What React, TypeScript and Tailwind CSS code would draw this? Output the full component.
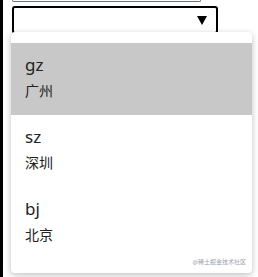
const CITIES = [
  { code: 'gz', name: '广州' },
  { code: 'sz', name: '深圳' },
  { code: 'bj', name: '北京' },
];

const FONT = "font-['Noto_Sans','Noto_Sans_CJK_SC',sans-serif]";

export default function App() {
  return (
    <div className={`relative h-[277px] w-[258px] overflow-hidden border-l-[3px] border-black bg-white ${FONT}`}>
      {/* bottom of the previous field, cut off at the top */}
      <div className="ml-[9px] h-[2px] w-[189px] rounded-b-[2px] border-x border-b border-gray-500" />

      <div className="ml-[9px] mt-[4px] flex h-[28px] w-[206px] items-center justify-end rounded-[3px] border-2 border-black pr-[9px]">
        <svg width="10" height="9" viewBox="0 0 10 9">
          <polygon points="0,0 10,0 5,9" fill="#000" />
        </svg>
      </div>

      <div className="absolute left-[8px] top-[32px] w-[241px] rounded-[4px] bg-white pb-[14px] pt-[11px] shadow-[0_2px_6px_rgba(0,0,0,0.25)]">
        <ul>
          {CITIES.map((c, i) => (
            <li
              key={c.code}
              className={`flex h-[72px] flex-col px-[14px] pt-[10px] text-[#222] ${i === 0 ? 'bg-[#c8c8c8]' : ''}`}
            >
              <span className="text-[17px] leading-[24px]">{c.code}</span>
              <span className="mt-[4px] text-[14px] leading-[20px]">{c.name}</span>
            </li>
          ))}
        </ul>
        <span className="absolute bottom-[8px] right-[6px] text-[6px] leading-none text-gray-400">@稀土掘金技术社区</span>
      </div>
    </div>
  );
}
